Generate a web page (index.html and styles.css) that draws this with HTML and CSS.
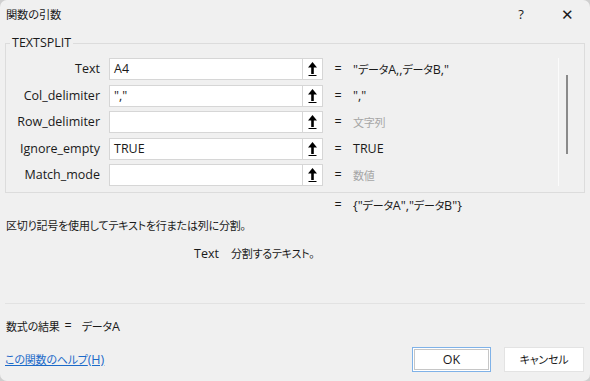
FILE: index.html
```html
<!DOCTYPE html>
<html lang="ja">
<head>
    <meta charset="UTF-8">
    <title>関数の引数</title>
    <link rel="stylesheet" href="styles.css">
</head>
<body>
    <div class="dialog">
        <header class="titlebar">
            <span class="title ja">関数の引数</span>
            <div class="title-btns">
                <span class="title-btn">?</span>
                <span class="title-btn close">✕</span>
            </div>
        </header>

        <fieldset class="args">
            <legend>TEXTSPLIT</legend>
            <div class="arg-list">
                <div class="arg-rows">
                    <div class="arg-row">
                        <label class="arg-label">Text</label>
                        <div class="arg-input">A4</div>
                        <div class="ref-btn">
                            <svg width="9" height="16" viewBox="0 0 9 16"><path d="M0 6.5L4.5 1 9 6.5z" fill="#000"/><path d="M4.5 5v8" stroke="#000" stroke-width="2.6"/><path d="M0.5 14.5h8" stroke="#000" stroke-width="1"/></svg>
                        </div>
                        <span class="eq">=</span>
                        <span class="arg-value">"<span class="ja">データ</span>A,,<span class="ja">データ</span>B,"</span>
                    </div>
                    <div class="arg-row">
                        <label class="arg-label">Col_delimiter</label>
                        <div class="arg-input">","</div>
                        <div class="ref-btn">
                            <svg width="9" height="16" viewBox="0 0 9 16"><path d="M0 6.5L4.5 1 9 6.5z" fill="#000"/><path d="M4.5 5v8" stroke="#000" stroke-width="2.6"/><path d="M0.5 14.5h8" stroke="#000" stroke-width="1"/></svg>
                        </div>
                        <span class="eq">=</span>
                        <span class="arg-value">","</span>
                    </div>
                    <div class="arg-row">
                        <label class="arg-label">Row_delimiter</label>
                        <div class="arg-input"></div>
                        <div class="ref-btn">
                            <svg width="9" height="16" viewBox="0 0 9 16"><path d="M0 6.5L4.5 1 9 6.5z" fill="#000"/><path d="M4.5 5v8" stroke="#000" stroke-width="2.6"/><path d="M0.5 14.5h8" stroke="#000" stroke-width="1"/></svg>
                        </div>
                        <span class="eq">=</span>
                        <span class="arg-value hint ja">文字列</span>
                    </div>
                    <div class="arg-row">
                        <label class="arg-label">Ignore_empty</label>
                        <div class="arg-input">TRUE</div>
                        <div class="ref-btn">
                            <svg width="9" height="16" viewBox="0 0 9 16"><path d="M0 6.5L4.5 1 9 6.5z" fill="#000"/><path d="M4.5 5v8" stroke="#000" stroke-width="2.6"/><path d="M0.5 14.5h8" stroke="#000" stroke-width="1"/></svg>
                        </div>
                        <span class="eq">=</span>
                        <span class="arg-value">TRUE</span>
                    </div>
                    <div class="arg-row">
                        <label class="arg-label">Match_mode</label>
                        <div class="arg-input"></div>
                        <div class="ref-btn">
                            <svg width="9" height="16" viewBox="0 0 9 16"><path d="M0 6.5L4.5 1 9 6.5z" fill="#000"/><path d="M4.5 5v8" stroke="#000" stroke-width="2.6"/><path d="M0.5 14.5h8" stroke="#000" stroke-width="1"/></svg>
                        </div>
                        <span class="eq">=</span>
                        <span class="arg-value hint ja">数値</span>
                    </div>
                </div>
                <div class="scrollbar">
                    <div class="scroll-track"></div>
                    <div class="scroll-thumb"></div>
                </div>
            </div>
        </fieldset>

        <div class="formula-value">
            <span class="eq">=</span>
            <span>{"<span class="ja">データ</span>A","<span class="ja">データ</span>B"}</span>
        </div>

        <p class="description ja">区切り記号を使用してテキストを行または列に分割。</p>

        <p class="arg-help"><span class="arg-help-name">Text</span><span class="ja">分割するテキスト。</span></p>

        <hr class="separator">

        <div class="result">
            <span class="ja">数式の結果</span>
            <span class="result-eq">=</span>
            <span><span class="ja">データ</span>A</span>
        </div>

        <footer class="footer">
            <a class="help-link" href="#"><span class="ja">この関数のヘルプ</span>(H)</a>
            <div class="buttons">
                <button class="btn btn-ok">OK</button>
                <button class="btn"><span class="ja">キャンセル</span></button>
            </div>
        </footer>
    </div>
</body>
</html>
```

FILE: styles.css
```css
* {
    margin: 0;
    padding: 0;
    box-sizing: border-box;
}

html, body {
    background: #cfcfcf;
}

body {
    font-family: "Open Sans", "Noto Sans CJK JP", sans-serif;
    font-size: 12.5px;
    line-height: 14px;
    color: #1a1a1a;
}

/* texto japonés: más estrecho */
.ja {
    font-family: "Noto Sans CJK JP", sans-serif;
    font-size: 11px;
    letter-spacing: -0.2px;
    font-feature-settings: "palt";
}

.dialog {
    width: 590px;
    height: 381px;
    background: #f0f0f0;
    border-radius: 7px;
    overflow: hidden;
    display: flex;
    flex-direction: column;
}

/* barra de título */
.titlebar {
    height: 28px;
    display: flex;
    align-items: center;
    justify-content: space-between;
    padding-left: 6px;
}

.title {
    font-size: 11.3px;
}

.title-btns {
    display: flex;
}

.title-btn {
    width: 46px;
    text-align: center;
    font-size: 13px;
}

.title-btn.close {
    font-size: 15px;
}

/* argumentos */
.args {
    margin: 8px 5px 0;
    border: 1px solid #dcdcdc;
    padding: 8px 0 6px;
}

.args legend {
    margin-left: 4px;
    padding: 0 2px;
    line-height: 14px;
}

.arg-list {
    display: flex;
}

.arg-rows {
    width: 552px;
    display: flex;
    flex-direction: column;
    gap: 4.5px;
}

.arg-row {
    display: flex;
    align-items: center;
    height: 22px;
}

.arg-label {
    width: 94px;
    text-align: right;
}

.arg-input {
    width: 193px;
    height: 22px;
    margin-left: 9px;
    padding: 3px 4px 0;
    background: #fff;
    border: 1px solid #d6d6d6;
    border-right: none;
}

.ref-btn {
    width: 21px;
    height: 22px;
    background: #fff;
    border: 1px solid #d6d6d6;
    display: flex;
    align-items: center;
    justify-content: center;
}

.eq {
    width: 30px;
    text-align: center;
}

.arg-value.hint {
    color: #a6a6a6;
}

.scrollbar {
    display: flex;
    align-items: flex-start;
}

.scroll-track {
    width: 1px;
    height: 128px;
    background: #fbfbfb;
}

.scroll-thumb {
    width: 2px;
    height: 79px;
    margin-top: 17px;
    margin-left: 7px;
    background: #8a8a8a;
}

/* descripción */
.formula-value {
    display: flex;
    padding-left: 323px;
    margin-top: 5px;
}

.description {
    padding-left: 6px;
    margin-top: 5px;
    height: 14px;
}

.arg-help {
    padding-left: 194px;
    margin-top: 14px;
    height: 14px;
}

.arg-help-name {
    margin-right: 12px;
}

.separator {
    margin: 43px 5px 0;
    border: none;
    border-top: 1px solid #e2e2e2;
}

.result {
    display: flex;
    padding-left: 6px;
    margin-top: 15px;
    height: 14px;
}

.result-eq {
    margin: 0 10px 0 5px;
}

/* pie */
.footer {
    display: flex;
    align-items: center;
    justify-content: space-between;
    margin-top: 14px;
    padding: 0 6px 0 5px;
}

.help-link {
    color: #1b6ac9;
    text-decoration: underline;
}

.buttons {
    display: flex;
    gap: 13px;
}

.btn {
    width: 80px;
    height: 25px;
    font-family: inherit;
    font-size: inherit;
    color: #1a1a1a;
    background: #fff;
    border: 1px solid #e3e3e3;
}

.btn-ok {
    width: 79px;
    border-color: #7fb2e8;
    box-shadow: inset 0 0 0 1px #fff, inset 0 0 0 2px #c6c6c6;
}
```
